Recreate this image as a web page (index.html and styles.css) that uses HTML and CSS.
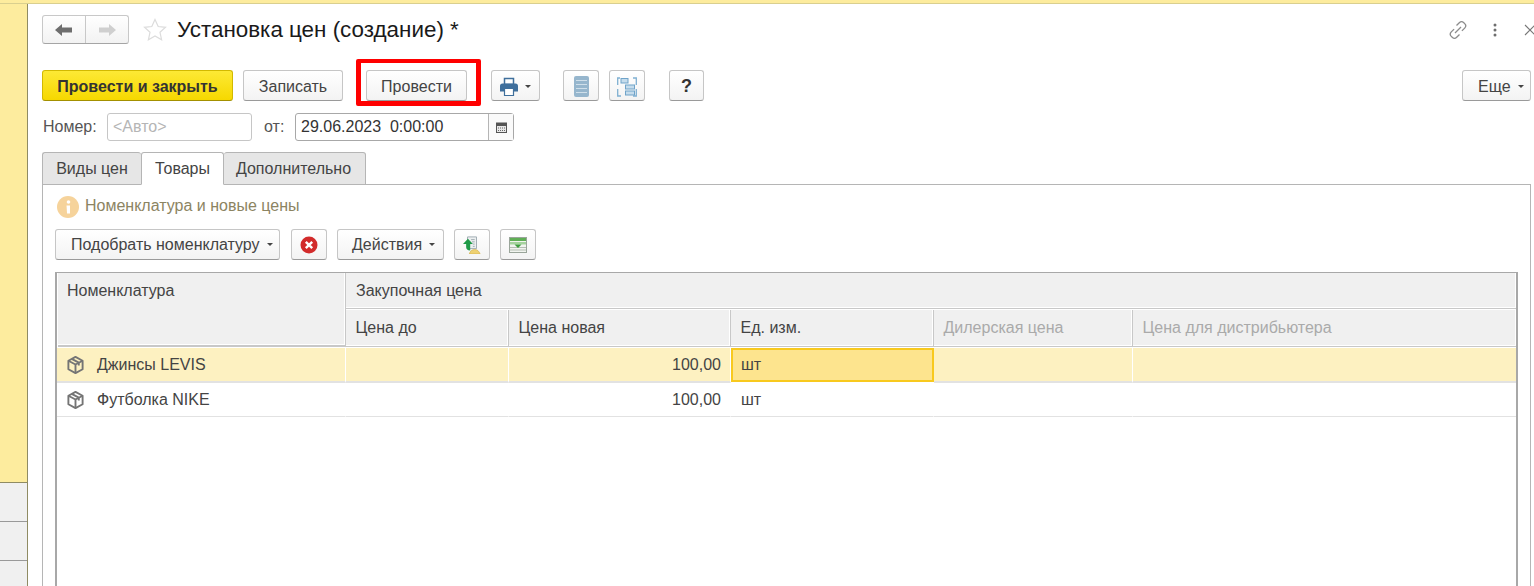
FILE: index.html
```html
<!DOCTYPE html>
<html lang="ru">
<head>
<meta charset="utf-8">
<title>Установка цен (создание)</title>
<link rel="stylesheet" href="styles.css">
</head>
<body>
<div class="topstrip"></div>
<div class="app">
  <aside class="side">
    <div class="side-yellow"></div>
    <div class="side-row"></div>
    <div class="side-row"></div>
    <div class="side-row"></div>
  </aside>
  <main class="main">
    <header class="head">
      <div class="nav">
        <button class="nav-btn"><svg width="20" height="14" viewBox="0 0 20 14"><path d="M1 7l7-6v3.500h10v5H8V13z" fill="#6e6e6e"/></svg></button>
        <button class="nav-btn"><svg width="20" height="14" viewBox="0 0 20 14"><path d="M19 7l-7-6v3.500H2v5h10V13z" fill="#cfcfcf"/></svg></button>
      </div>
      <svg class="star" width="24" height="24" viewBox="0 0 24 24"><path d="M12 1.500l3.200 7 7.300.8-5.500 5 1.600 7.500-6.600-3.900-6.600 3.900 1.600-7.500-5.500-5 7.300-.8z" fill="none" stroke="#dcdcdc" stroke-width="1.200"/></svg>
      <h1 class="title">Установка цен (создание) *</h1>
      <div class="head-icons">
        <svg class="link-ic" width="20" height="20" viewBox="0 0 20 20"><g fill="none" stroke="#8c8c8c" stroke-width="1.300"><path d="M8.500 5.500l2.800-2.800a3.200 3.200 0 0 1 4.500 0l.9.900a3.200 3.200 0 0 1 0 4.500l-2.800 2.800"/><path d="M11.500 14.500l-2.800 2.800a3.200 3.200 0 0 1-4.500 0l-.9-.9a3.200 3.200 0 0 1 0-4.500l2.800-2.800"/><path d="M7 13l6-6"/></g></svg>
        <svg class="dots" width="4" height="14" viewBox="0 0 4 14"><g fill="#6e6e6e"><circle cx="2" cy="2" r="1.500"/><circle cx="2" cy="7" r="1.500"/><circle cx="2" cy="12" r="1.500"/></g></svg>
        <svg class="close" width="12" height="12" viewBox="0 0 12 12"><path d="M1 1l10 10M11 1L1 11" stroke="#777" stroke-width="1.100"/></svg>
      </div>
    </header>

    <div class="toolbar">
      <button class="btn btn-primary w-191">Провести и закрыть</button>
      <button class="btn w-100 ml-10">Записать</button>
      <div class="redbox"><button class="btn w-101">Провести</button></div>
      <button class="btn btn-menu w-49 ml-10 btn-print">
        <svg width="18" height="20" viewBox="0 0 18 20"><path d="M4.500 1.500h9v6h-9z" fill="#fff" stroke="#3f6f9c" stroke-width="1.500"/><path d="M2.500 6.500h13a2.500 2.500 0 0 1 2.500 2.500v5.500h-4v-3H4v3H0V9a2.500 2.500 0 0 1 2.500-2.500z" fill="#3f6f9c"/><path d="M4.500 11.500h9v7h-9z" fill="#fff" stroke="#3f6f9c" stroke-width="1.200"/></svg>
        <span class="caret"></span>
      </button>
      <button class="btn w-36 ml-23">
        <svg width="15" height="21" viewBox="0 0 15 21"><rect width="15" height="21" rx="2" fill="#96b6cd"/><path d="M2 4.500h11M2 8.500h11M2 12.500h11M2 16.500h11" stroke="#cfdfea" stroke-width="1.200"/></svg>
      </button>
      <button class="btn w-36 ml-10">
        <svg width="20" height="20" viewBox="0 0 20 20"><g fill="none" stroke="#7fb0d2" stroke-width="1.300"><path d="M3 1H.7v7M4 19H.7v-7M16 1h3.300v7M16 19h3.300v-7"/></g><rect x="4" y="1.500" width="7" height="4.500" fill="#c5dcec" stroke="#6fa3c9"/><rect x="8.500" y="8" width="9" height="4" fill="#c5dcec" stroke="#6fa3c9"/><rect x="8.500" y="14" width="9" height="4" fill="#c5dcec" stroke="#6fa3c9"/></svg>
      </button>
      <button class="btn w-35 ml-24 help">?</button>
      <button class="btn btn-menu w-69 more">Еще<span class="caret"></span></button>
    </div>

    <div class="formrow">
      <label class="lbl">Номер:</label>
      <div class="field f-num">&lt;Авто&gt;</div>
      <label class="lbl lbl-from">от:</label>
      <div class="field f-date">
        <span>29.06.2023&nbsp; 0:00:00</span>
        <span class="f-date-btn"><svg width="11" height="11" viewBox="0 0 11 11"><rect x=".5" y="1" width="10" height="9.500" fill="#e8e8e8" stroke="#555"/><rect x="0" y="1" width="11" height="3" fill="#555"/><path d="M2 6h7M2 8.500h7" stroke="#666" stroke-dasharray="1 1"/></svg></span>
      </div>
    </div>

    <nav class="tabs">
      <div class="tab t1">Виды цен</div>
      <div class="tab tab-on t2">Товары</div>
      <div class="tab t3">Дополнительно</div>
    </nav>

    <section class="panel">
      <div class="info">
        <svg width="22" height="22" viewBox="0 0 22 22"><circle cx="11" cy="11" r="11" fill="#f6d39b"/><circle cx="11.500" cy="6" r="1.800" fill="#fff"/><path d="M9.500 9.500h3.500v8h-3z" fill="#fff"/></svg>
        <span class="info-text">Номенклатура и новые цены</span>
      </div>
      <div class="panelbar">
        <button class="btn btn-menu w-225">Подобрать номенклатуру<span class="caret"></span></button>
        <button class="btn w-36 ml-1"><svg width="18" height="18" viewBox="0 0 18 18"><circle cx="9" cy="9" r="8.500" fill="#d22b2b"/><path d="M5.800 5.800l6.400 6.400M12.200 5.800l-6.400 6.400" stroke="#fff" stroke-width="2.400"/></svg></button>
        <button class="btn btn-menu btn-act w-107">Действия<span class="caret"></span></button>
        <button class="btn w-36"><svg width="18" height="18" viewBox="0 0 20 20"><path d="M5 1h10v13H5z" fill="#eceff0" stroke="#9aa7ae"/><path d="M9 4h4M10 6.500h3M11 9h2M11 11.500h2" stroke="#9aa7ae"/><path d="M5.500 3L0 9h3.500v3.500c0 2 1.500 3.500 4.500 3.500v-7h3z" fill="#1f9a47"/><path d="M7 20c.5-3 3-5 6-5s5 2 6 5z" fill="#eed172" stroke="#d2b04a" stroke-width=".7"/></svg></button>
        <button class="btn w-36"><svg width="18" height="16" viewBox="0 0 18 16"><rect x=".5" y=".5" width="17" height="15" fill="#f1f4ef" stroke="#9aa59a"/><rect x="1" y="1" width="16" height="3" fill="#5fae55"/><rect x="1" y="5" width="16" height="2.500" fill="#a5d39d"/><path d="M1 10.500h16M1 13h16" stroke="#b5bdb3"/><path d="M5.500 7.500h7L9 11z" fill="#3e9d3e"/></svg></button>
      </div>

      <div class="grid">
        <div class="hc hc-name">Номенклатура</div>
        <div class="hc hc-group">Закупочная цена</div>
        <div class="hc">Цена до</div>
        <div class="hc">Цена новая</div>
        <div class="hc">Ед. изм.</div>
        <div class="hc hc-off">Дилерская цена</div>
        <div class="hc hc-off hc-last">Цена для дистрибьютера</div>

        <div class="c c-sel c-name"><svg class="box" width="17" height="18" viewBox="0 0 17 19"><g fill="none" stroke="#757575" stroke-width="2" stroke-linejoin="round"><path d="M8.500 1L16 5v9l-7.500 4L1 14V5z"/><path d="M1 5l7.500 4L16 5M8.500 9v9M4.500 3l7.500 4v3"/></g></svg>Джинсы LEVIS</div>
        <div class="c c-sel"></div>
        <div class="c c-sel c-num">100,00</div>
        <div class="c c-cur">шт</div>
        <div class="c c-sel"></div>
        <div class="c c-sel c-last"></div>

        <div class="c c-name"><svg class="box" width="17" height="18" viewBox="0 0 17 19"><g fill="none" stroke="#757575" stroke-width="2" stroke-linejoin="round"><path d="M8.500 1L16 5v9l-7.500 4L1 14V5z"/><path d="M1 5l7.500 4L16 5M8.500 9v9M4.500 3l7.500 4v3"/></g></svg>Футболка NIKE</div>
        <div class="c"></div>
        <div class="c c-num">100,00</div>
        <div class="c">шт</div>
        <div class="c"></div>
        <div class="c c-last"></div>
      </div>
    </section>
  </main>
</div>
</body>
</html>
```
FILE: styles.css
```css
* { box-sizing: border-box; }
html, body { margin: 0; height: 586px; overflow: hidden; background: #fff; }
body { font: 16px "Liberation Sans", Arial, sans-serif; color: #333; }
button { font: inherit; color: inherit; }

.topstrip { height: 4px; background: #fdec9e; border-bottom: 1px solid #d9cf8f; }
.app { display: flex; height: 582px; }

.side { width: 28px; flex: none; display: flex; flex-direction: column; border-right: 1px solid #8f8b63; }
.side-yellow { height: 479px; flex: none; background: #fdec9e; border-bottom: 1px solid #8f8b63; }
.side-row { height: 39px; flex: none; background: #f0f0f0; border-bottom: 1px solid #999; }

.main { flex: 1; min-width: 0; padding-left: 14px; display: flex; flex-direction: column; }

.head { height: 29px; margin-top: 11px; display: flex; align-items: center; flex: none; }
.nav { display: flex; width: 87px; height: 29px; border: 1px solid #c8c8c8; border-bottom-color: #a5a5a5; border-radius: 3px; background: linear-gradient(#fff, #f2f2f2); }
.nav-btn { flex: 1; border: 0; background: none; padding: 0; display: flex; align-items: center; justify-content: center; }
.nav-btn + .nav-btn { border-left: 1px solid #c8c8c8; }
.star { margin-left: 14px; flex: none; }
.title { margin: 0 0 0 10px; font-size: 22.4px; font-weight: 400; color: #1a1a1a; white-space: nowrap; }
.head-icons { margin-left: auto; display: flex; align-items: center; margin-right: -2px; }
.dots { margin-left: 25px; }
.close { margin-left: 27px; flex: none; }

.toolbar { display: flex; align-items: flex-end; height: 47px; margin-top: 15px; margin-right: 3px; flex: none; padding-bottom: 5px; }
.btn { height: 31px; padding: 0; border: 1px solid #c6c6c6; border-bottom-color: #9a9a9a; border-radius: 3px; background: linear-gradient(#fff, #f3f3f3); display: flex; align-items: center; justify-content: center; color: #444; white-space: nowrap; flex: none; }
.toolbar .btn { padding-top: 2px; }
.btn-primary { background: linear-gradient(#fde935, #f6d800); border-color: #d2b900; border-bottom-color: #a39000; font-weight: 700; color: #333; }
.btn-menu { justify-content: flex-start; padding-left: 15px; }
.btn-act { padding-left: 14px; }
.toolbar .btn-print { padding-left: 8px; }
.w-191 { width: 191px; }
.w-100 { width: 100px; }
.w-101 { width: 101px; }
.w-49 { width: 49px; }
.w-36 { width: 36px; }
.w-35 { width: 35px; }
.w-69 { width: 69px; }
.w-225 { width: 225px; }
.w-107 { width: 107px; }
.ml-1 { margin-left: 1px; }
.ml-10 { margin-left: 10px; }
.ml-23 { margin-left: 23px; }
.ml-24 { margin-left: 24px; }
.help { font-weight: 700; font-size: 18px; color: #333; }
.more { margin-left: auto; }
.redbox { margin-left: 13px; margin-bottom: -5px; width: 125px; height: 47px; border: 5px solid #f00; border-top-width: 4px; border-radius: 2px; padding: 7px 0 0 5px; flex: none; }
.caret { display: inline-block; margin-left: 7px; width: 0; height: 0; border: 3px solid transparent; border-top: 3px solid #444; border-bottom: 0; flex: none; }

.formrow { display: flex; align-items: center; height: 28px; margin-top: 7px; flex: none; }
.lbl { color: #555; width: 65px; padding-left: 1px; }
.lbl-from { width: 43px; padding-left: 12px; }
.field { height: 28px; border: 1px solid #c6c6c6; border-radius: 3px; display: flex; align-items: center; background: #fff; }
.f-num { width: 145px; padding-left: 5px; color: #b5b5b5; }
.f-date { width: 219px; padding-left: 5px; border-color: #a8a8a8; color: #333; justify-content: space-between; padding-right: 0; }
.f-date-btn { width: 25px; height: 26px; border-left: 1px solid #b5b5b5; display: flex; align-items: center; justify-content: center; background: #fafafa; }

.tabs { display: flex; height: 33px; margin-top: 11px; flex: none; position: relative; z-index: 1; }
.tab { height: 33px; display: flex; align-items: center; justify-content: center; background: #e6e6e6; border: 1px solid #b5b5b5; border-radius: 3px 3px 0 0; color: #444; }
.t1 { width: 99px; border-right: 0; }
.t2 { width: 83px; }
.t3 { width: 142px; border-left: 0; padding-right: 2px; }
.tab-on { background: #fff; border-bottom-color: #fff; }

.panel { margin-top: -1px; margin-right: 3px; flex: 1; min-height: 0; border: 1px solid #b5b5b5; border-bottom: 0; padding: 11px 12px 0; display: flex; flex-direction: column; }
.info { display: flex; align-items: center; height: 22px; margin-left: 2px; gap: 6px; }
.info-text { color: #8c8462; margin-bottom: 2px; }
.panelbar { display: flex; gap: 10px; margin-top: 11px; flex: none; }

.grid { margin-top: 12px; flex: 1; border: 1px solid #a8a8a8; border-left-width: 2px; border-right-width: 2px; border-bottom: 0; display: grid; grid-template-columns: 289px 163px 222px 203px 199px 1fr; grid-template-rows: 37px 38px 35px 34px 1fr; }
.hc { background: #f0f0f0; border-right: 1px solid #c8c8c8; border-bottom: 1px solid #c8c8c8; box-shadow: inset -1px -1px 0 #fff; padding: 9px 9.500px 0; color: #444; white-space: nowrap; margin-bottom: 1px; }
.hc-name { grid-row: span 2; border-bottom: 2px solid #c8c8c8; margin-left: 1px; padding-left: 9px; }
.hc-group { grid-column: span 5; border-right: 0; padding-left: 10px; }
.hc-off { color: #aaa; }
.hc-last { border-right: 0; }
.c { border-bottom: 1px solid #e2e2e2; padding: 0 9px 0 10px; display: flex; align-items: center; color: #444; border-right: 1px solid transparent; }
.c-sel { background: #fdf1c1; border-right-color: #fff; border-bottom: 2px solid #e2e2e2; }
.c-num { justify-content: flex-end; }
.c-cur { background: #fde48e; border: 2px solid #f8c91e; margin-bottom: 1px; padding-left: 8px; }
.c-last { border-right: 0; }
.box { margin-right: 13px; flex: none; }
```
